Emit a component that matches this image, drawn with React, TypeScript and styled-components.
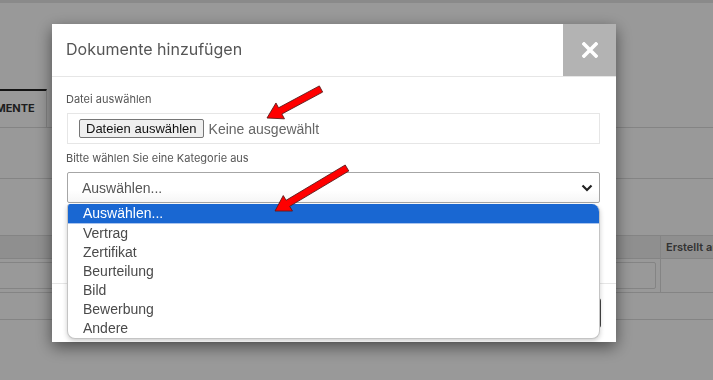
import React from 'react'
import styled, { createGlobalStyle } from 'styled-components'

const GlobalStyle = createGlobalStyle`
  html, body {
    margin: 0;
    padding: 0;
    width: 713px;
    height: 380px;
    overflow: hidden;
    background: #fff;
    font-family: Inter, "Noto Sans", sans-serif;
  }
`

const Page = styled.div`
  width: 713px;
  height: 380px;
  overflow: hidden;
`

const TopStrip = styled.div`
  height: 3px;
  background: #e6e6e6;
`

const TabsBar = styled.div`
  display: flex;
  margin-top: 86px;
  height: 38px;
  border-bottom: 1px solid #dcdcdc;
`

const Tab = styled.div`
  margin-left: -47px;
  padding: 0 11px 0 10px;
  border-top: 2px solid #222;
  border-right: 1px solid #dcdcdc;
  font-size: 11px;
  font-weight: 700;
  line-height: 34px;
  color: #333;
`

const Toolbar = styled.div`
  height: 50px;
  border-bottom: 1px solid #dcdcdc;
`

const Table = styled.div`
  margin: 56px 0 0 -20px;
  display: grid;
  grid-template-columns: 681px 160px;
  width: 841px;
`

const HeadCell = styled.div<{ last?: boolean }>`
  height: 22px;
  line-height: 22px;
  padding-left: 5px;
  background: #efefef;
  border-top: 1px solid #dcdcdc;
  border-bottom: 1px solid #dcdcdc;
  border-right: ${p => (p.last ? 'none' : '1px solid #dcdcdc')};
  font-size: 11px;
  font-weight: 600;
  color: #555;
  white-space: nowrap;
`

const FilterCell = styled.div<{ last?: boolean }>`
  height: 34px;
  padding: 3px 4px;
  box-sizing: border-box;
  border-bottom: 1px solid #dcdcdc;
  border-right: ${p => (p.last ? 'none' : '1px solid #dcdcdc')};
`

const FilterInput = styled.div`
  height: 27px;
  border: 1px solid #dcdcdc;
  box-sizing: border-box;
  border-radius: 2px;
`

const EmptyRow = styled.div`
  height: 26px;
  border-bottom: 1px solid #dcdcdc;
`

const Backdrop = styled.div`
  position: fixed;
  inset: 0;
  background: rgba(0, 0, 0, 0.4);
  padding: 24px 0 0 52px;
  box-sizing: border-box;
`

const Modal = styled.div`
  width: 564px;
  background: #fff;
  box-shadow: 0 5px 15px rgba(0, 0, 0, 0.5);
`

const Header = styled.div`
  display: flex;
  height: 52px;
  border-bottom: 1px solid #e6e6e6;
`

const Title = styled.h4`
  flex: 1;
  margin: 0;
  padding-left: 14px;
  font-size: 16px;
  font-weight: 400;
  line-height: 50px;
  color: #555;
`

const CloseButton = styled.div`
  width: 53px;
  display: flex;
  align-items: center;
  justify-content: center;
  background: #b3b3b3;
`

const Body = styled.div`
  height: 206px;
  box-sizing: border-box;
  padding: 16px 16px 0 15px;
`

const Label = styled.div<{ spaced?: boolean }>`
  font-size: 11px;
  line-height: 13px;
  color: #555;
  margin: ${p => (p.spaced ? '8px' : '0')} 0 7px -1px;
`

const FileBox = styled.div`
  height: 31px;
  box-sizing: border-box;
  border: 1px solid #e6e6e6;
  display: flex;
  align-items: center;
  padding-left: 11px;
  font-family: "Liberation Sans", Arial, sans-serif;
`

const FileButton = styled.div`
  height: 19px;
  box-sizing: border-box;
  padding: 0 6px;
  border: 1px solid #767676;
  border-radius: 2px;
  background: #efefef;
  font-size: 13px;
  line-height: 17px;
  color: #111;
`

const FileHint = styled.span`
  margin-left: 5px;
  font-size: 14px;
  color: #666;
`

const SelectWrap = styled.div`
  position: relative;
`

const SelectBox = styled.div`
  height: 31px;
  box-sizing: border-box;
  border: 1px solid #a6a6a6;
  border-radius: 2px;
  display: flex;
  align-items: center;
  justify-content: space-between;
  padding: 0 6px 0 14px;
  font-family: "Liberation Sans", Arial, sans-serif;
  font-size: 14px;
  color: #555;
  background: linear-gradient(#fff 60%, #f6f6f6);
`

const Options = styled.ul`
  position: absolute;
  top: 100%;
  left: 0;
  right: 0;
  margin: 1px 0 0;
  padding: 0;
  list-style: none;
  background: #fff;
  border: 1px solid #c4c4c4;
  border-top: none;
  border-radius: 3px 8px 8px 8px;
  overflow: hidden;
  box-shadow: 0 2px 5px rgba(0, 0, 0, 0.2);
  font-family: "Liberation Sans", Arial, sans-serif;
`

const Option = styled.li<{ active?: boolean }>`
  height: 19px;
  line-height: 19px;
  padding-left: 15px;
  font-size: 14px;
  color: ${p => (p.active ? '#fff' : '#4a4a4a')};
  background: ${p => (p.active ? '#1967d2' : 'transparent')};
  border-bottom: ${p => (p.active ? '1px solid #a9c4ee' : 'none')};
`

const Footer = styled.div`
  height: 59px;
  box-sizing: border-box;
  border-top: 1px solid #e6e6e6;
  display: flex;
  align-items: center;
  justify-content: flex-end;
  padding: 0 15px;
`

const SubmitButton = styled.div`
  height: 30px;
  width: 90px;
  background: #444;
  border-radius: 3px;
`

const ArrowLayer = styled.svg`
  position: fixed;
  inset: 0;
  pointer-events: none;
`

const options = ['Auswählen...', 'Vertrag', 'Zertifikat', 'Beurteilung', 'Bild', 'Bewerbung', 'Andere']

function Arrow({ x1, y1, x2, y2 }: { x1: number; y1: number; x2: number; y2: number }) {
  const len = Math.hypot(x2 - x1, y2 - y1)
  const angle = (Math.atan2(y2 - y1, x2 - x1) * 180) / Math.PI
  const head = 15
  const pts = [
    [0, -3.5],
    [len - head, -3.5],
    [len - head, -9],
    [len, 0],
    [len - head, 9],
    [len - head, 3.5],
    [0, 3.5],
  ]
    .map(p => p.join(','))
    .join(' ')
  return (
    <polygon
      points={pts}
      transform={`translate(${x1} ${y1}) rotate(${angle})`}
      fill="#ff0000"
      stroke="#5a1a1a"
      strokeWidth="0.8"
      strokeLinejoin="round"
    />
  )
}

export default function App() {
  return (
    <>
      <GlobalStyle />
      <Page>
        <TopStrip />
        <TabsBar>
          <Tab>DOKUMENTE</Tab>
        </TabsBar>
        <Toolbar />
        <Table>
          <HeadCell />
          <HeadCell last>Erstellt am</HeadCell>
          <FilterCell>
            <FilterInput />
          </FilterCell>
          <FilterCell last />
        </Table>
        <EmptyRow />
      </Page>

      <Backdrop>
        <Modal>
          <Header>
            <Title>Dokumente hinzufügen</Title>
            <CloseButton>
              <svg width="16" height="16" viewBox="0 0 16 16">
                <path d="M2 2L14 14M14 2L2 14" stroke="#fff" strokeWidth="3.6" strokeLinecap="square" />
              </svg>
            </CloseButton>
          </Header>
          <Body>
            <Label>Datei auswählen</Label>
            <FileBox>
              <FileButton>Dateien auswählen</FileButton>
              <FileHint>Keine ausgewählt</FileHint>
            </FileBox>
            <Label spaced>Bitte wählen Sie eine Kategorie aus</Label>
            <SelectWrap>
              <SelectBox>
                Auswählen...
                <svg width="12" height="8" viewBox="0 0 12 8">
                  <path d="M1.5 1.5L6 6L10.5 1.5" fill="none" stroke="#222" strokeWidth="2.2" />
                </svg>
              </SelectBox>
              <Options>
                {options.map((o, i) => (
                  <Option key={o} active={i === 0}>
                    {o}
                  </Option>
                ))}
              </Options>
            </SelectWrap>
          </Body>
          <Footer>
            <SubmitButton />
          </Footer>
        </Modal>
      </Backdrop>

      <ArrowLayer width="713" height="380">
        <Arrow x1={321} y1={89} x2={267} y2={118} />
        <Arrow x1={347} y1={168} x2={275} y2={211} />
      </ArrowLayer>
    </>
  )
}
